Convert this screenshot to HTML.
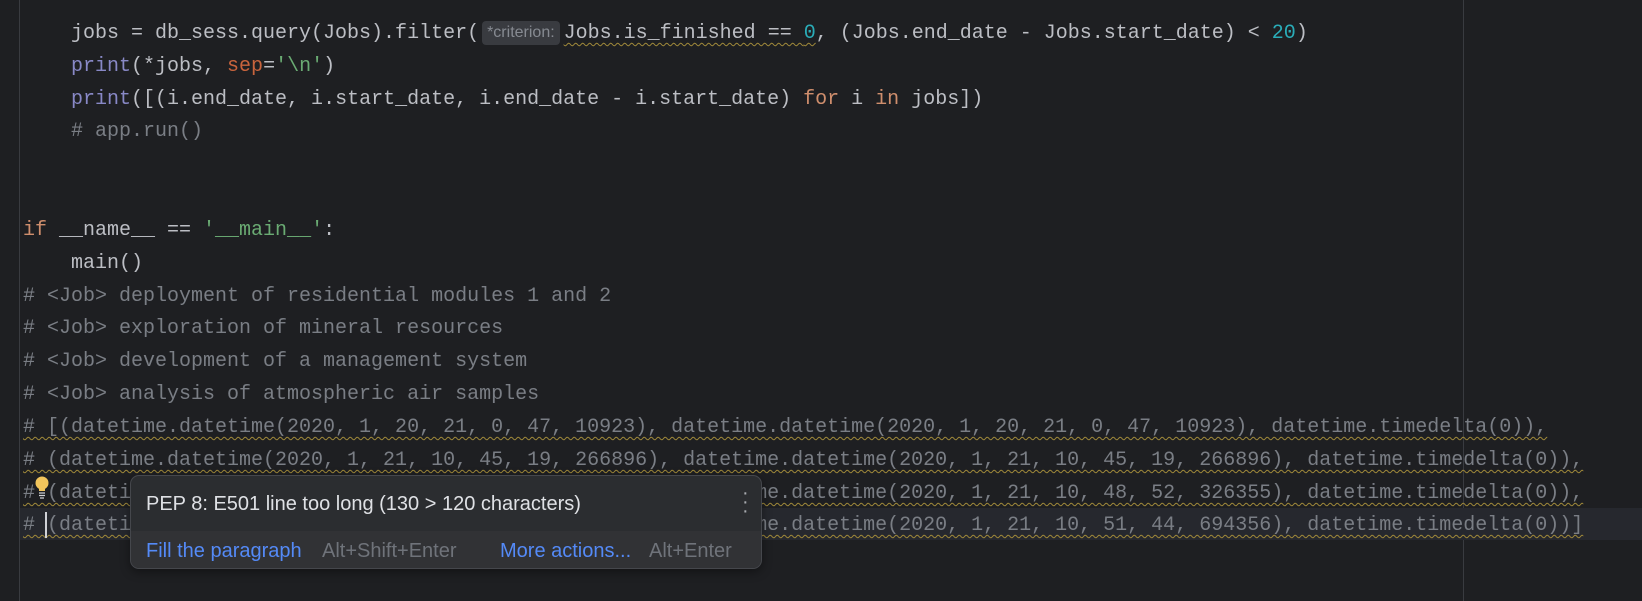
<!DOCTYPE html>
<html><head><meta charset="utf-8"><style>
body{margin:0;width:1642px;height:601px;background:#1e1f22;overflow:hidden;position:relative;font-family:"Liberation Mono",monospace;font-size:20px;color:#bcbec4}
.l{position:absolute;left:23px;height:33px;line-height:33px;white-space:pre}
.c{color:#7a7e85}.k{color:#cf8e6d}.s{color:#6aab73}.n{color:#2aacb8}.b{color:#8888c6}.p{color:#c8643d}
.w{text-decoration:underline wavy #a18a3a;text-decoration-thickness:1px;text-underline-offset:4px}
.hint{display:inline-block;background:#393b40;color:#868a91;font-family:"Liberation Sans",sans-serif;font-size:16px;line-height:24px;padding:0 5px;border-radius:4px;margin:0 4px 0 3px;vertical-align:1px}
.pop{position:absolute;left:130px;top:475px;width:630px;height:92px;background:#2b2d30;border:1px solid #45474c;border-radius:9px;font-family:"Liberation Sans",sans-serif;font-size:20px;overflow:hidden;box-shadow:0 3px 10px rgba(0,0,0,.4)}
.pop .bot{position:absolute;left:0;top:55px;width:100%;height:37px;background:#313235}
</style></head><body>
<div style="position:absolute;left:19px;top:0;width:1px;height:601px;background:#393b40"></div>
<div style="position:absolute;left:1463px;top:0;width:1px;height:601px;background:#393b40"></div>
<div style="position:absolute;left:20px;top:508px;width:1622px;height:32px;background:#26282e"></div>
<div class="l" style="top:17px">    jobs = db_sess.query(Jobs).filter(<span class="hint">*criterion:</span><span class="w">Jobs.is_finished == <span class="n">0</span></span>, (Jobs.end_date - Jobs.start_date) &lt; <span class="n">20</span>)</div>
<div class="l" style="top:50px">    <span class="b">print</span>(*jobs, <span class="p">sep</span>=<span class="s">'\n'</span>)</div>
<div class="l" style="top:83px">    <span class="b">print</span>([(i.end_date, i.start_date, i.end_date - i.start_date) <span class="k">for</span> i <span class="k">in</span> jobs])</div>
<div class="l c" style="top:115px">    # app.run()</div>
<div class="l" style="top:214px"><span class="k">if</span> __name__ == <span class="s">'__main__'</span>:</div>
<div class="l" style="top:247px">    main()</div>
<div class="l c" style="top:280px"># &lt;Job&gt; deployment of residential modules 1 and 2</div>
<div class="l c" style="top:312px"># &lt;Job&gt; exploration of mineral resources</div>
<div class="l c" style="top:345px"># &lt;Job&gt; development of a management system</div>
<div class="l c" style="top:378px"># &lt;Job&gt; analysis of atmospheric air samples</div>
<div class="l c w" style="top:411px"># [(datetime.datetime(2020, 1, 20, 21, 0, 47, 10923), datetime.datetime(2020, 1, 20, 21, 0, 47, 10923), datetime.timedelta(0)),</div>
<div class="l c w" style="top:444px"># (datetime.datetime(2020, 1, 21, 10, 45, 19, 266896), datetime.datetime(2020, 1, 21, 10, 45, 19, 266896), datetime.timedelta(0)),</div>
<div class="l c w" style="top:477px"># (datetime.datetime(2020, 1, 21, 10, 48, 52, 326355), datetime.datetime(2020, 1, 21, 10, 48, 52, 326355), datetime.timedelta(0)),</div>
<div class="l c w" style="top:509px"># (datetime.datetime(2020, 1, 21, 10, 51, 44, 694356), datetime.datetime(2020, 1, 21, 10, 51, 44, 694356), datetime.timedelta(0))]</div>
<div style="position:absolute;left:45px;top:512px;width:2px;height:26px;background:#cfd1d6"></div>
<svg style="position:absolute;left:35px;top:476px" width="14" height="24" viewBox="0 0 14 24"><circle cx="7" cy="7" r="6.5" fill="#f2c55c"/><path d="M4 11h6v4H4z" fill="#f2c55c"/><path d="M4 17h6M4 19.5h6M5 22h4" stroke="#cfd1d6" stroke-width="1.3"/></svg>
<div class="pop">
<div style="position:absolute;left:15px;top:17px;color:#dfe1e5">PEP 8: E501 line too long (130 &gt; 120 characters)</div>
<div style="position:absolute;right:15px;top:13px;color:#a8abb0;font-size:20px;line-height:9px;width:4px;text-align:center">·<br>·<br>·</div>
<div class="bot">
<span style="position:absolute;left:15px;top:9px;color:#548af7">Fill the paragraph</span>
<span style="position:absolute;left:191px;top:9px;color:#6f737a">Alt+Shift+Enter</span>
<span style="position:absolute;left:369px;top:9px;color:#548af7">More actions...</span>
<span style="position:absolute;left:518px;top:9px;color:#6f737a">Alt+Enter</span>
</div></div>
</body></html>
